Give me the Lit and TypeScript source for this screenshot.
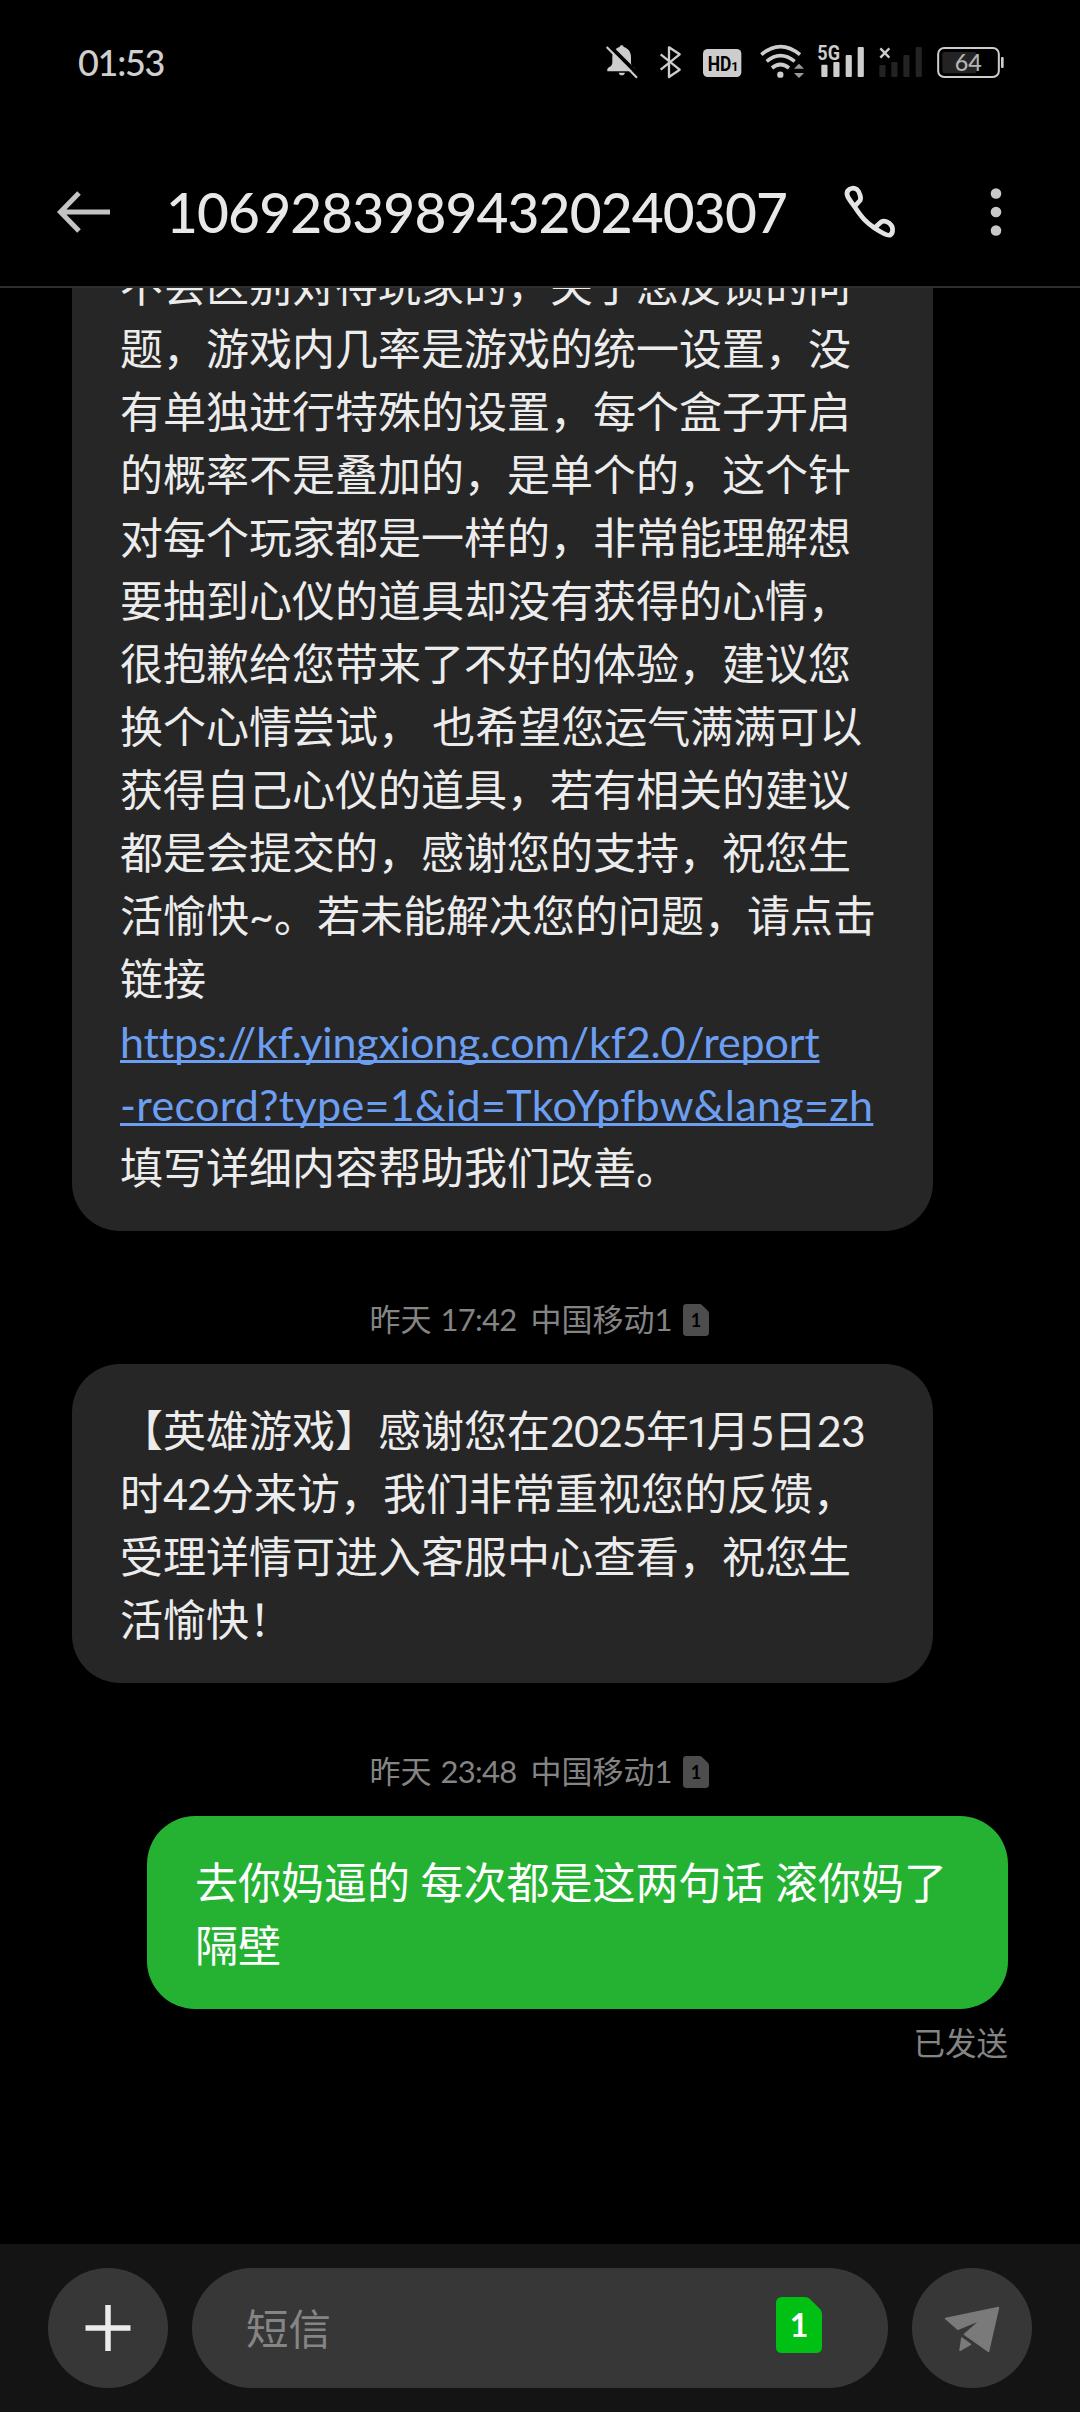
import { LitElement, html, css, svg, nothing } from "lit";
import { customElement, property } from "lit/decorators.js";

type Part = string | { t: string; k: "num" | "one" | "link-a" | "link-b" };
type Line = Part[];

interface Message {
  sent: boolean;
  time: string | null;
  lines: Line[];
}

const MESSAGES: Message[] = [
  {
    sent: false,
    time: null,
    lines: [
      ["不会区别对待玩家的，关于您反馈的问"],
      ["题，游戏内几率是游戏的统一设置，没"],
      ["有单独进行特殊的设置，每个盒子开启"],
      ["的概率不是叠加的，是单个的，这个针"],
      ["对每个玩家都是一样的，非常能理解想"],
      ["要抽到心仪的道具却没有获得的心情，"],
      ["很抱歉给您带来了不好的体验，建议您"],
      ["换个心情尝试， 也希望您运气满满可以"],
      ["获得自己心仪的道具，若有相关的建议"],
      ["都是会提交的，感谢您的支持，祝您生"],
      ["活愉快~。若未能解决您的问题，请点击"],
      ["链接"],
      [{ t: "https://kf.yingxiong.com/kf2.0/report", k: "link-a" }],
      [{ t: "-record?type=1&id=TkoYpfbw&lang=zh", k: "link-b" }],
      ["填写详细内容帮助我们改善。"],
    ],
  },
  {
    sent: false,
    time: "17:42",
    lines: [
      [
        "【英雄游戏】感谢您在",
        { t: "2025", k: "num" },
        "年",
        { t: "1", k: "one" },
        "月",
        { t: "5", k: "num" },
        "日",
        { t: "23", k: "num" },
      ],
      ["时", { t: "42", k: "num" }, "分来访，我们非常重视您的反馈，"],
      ["受理详情可进入客服中心查看，祝您生"],
      ["活愉快！"],
    ],
  },
  {
    sent: true,
    time: "23:48",
    lines: [["去你妈逼的 每次都是这两句话 滚你妈了"], ["隔壁"]],
  },
];

@customElement("status-bar")
class StatusBar extends LitElement {
  static styles = css`
    :host {
      display: flex;
      align-items: flex-start;
      height: 80px;
      padding: 44px 75px 0 78px;
      box-sizing: border-box;
    }
    .time {
      flex: 1;
      font: 500 36px/36px Lato, sans-serif;
      letter-spacing: -1.3px;
      color: #cfcfcf;
    }
    svg {
      display: block;
      height: 36px;
      flex: none;
      fill: #cdcdcd;
    }
    .line {
      fill: none;
      stroke: #cdcdcd;
    }
    .dim {
      fill: #232323;
    }
    .bell { width: 34px; }
    .bt { width: 23px; margin-left: 20px; }
    .hd { width: 40px; margin-left: 20px; }
    .wifi { width: 46px; margin-left: 17px; }
    .cell { width: 48px; margin-left: 12px; }
    .none { width: 45px; margin-left: 13px; }
    .battery { width: 69px; margin-left: 13px; }
    .bold { font-family: Roboto, sans-serif; font-weight: 700; }
    .level { font-family: Lato, sans-serif; font-weight: 500; fill: #b4b4b4; }
  `;

  render() {
    return html`
      <div class="time">01:53</div>
      <svg class="bell" viewBox="75 42 102 108">
        <path d="M125 46c-3 0-6 2-6 5-14 4-22 15-22 30v16c0 8-4 12-10 15-5 3-6 7-5 12h84c1-5 0-9-5-12-6-3-8-7-8-15V81c0-15-8-26-22-30 0-3-3-5-6-5z" />
        <path d="M116 128h19c-1 5-5 8-9.500 8s-8.500-3-9.500-8z" />
        <path d="M85 44L181 140" stroke="#000" stroke-width="12" />
        <path class="line" d="M80 51L171 143" stroke-width="6.500" />
      </svg>
      <svg class="bt" viewBox="237 42 69 108">
        <path class="line" stroke-width="7" stroke-linejoin="round" d="M242 73L299 119L267 141V52L299 73L242 119" />
      </svg>
      <svg class="hd" viewBox="366 42 120 108">
        <rect x="369" y="57" width="115" height="84" rx="14" />
        <text class="bold" x="383" y="123" font-size="62" fill="#000" textLength="71" lengthAdjust="spacingAndGlyphs">HD</text>
        <text class="bold" x="454" y="122" font-size="38" fill="#000">1</text>
      </svg>
      <svg class="wifi" viewBox="537 42 138 108">
        <g class="line" stroke-width="11">
          <path d="M544 74Q601 26 660 74" />
          <path d="M560 94Q601 60 644 94" />
          <path d="M576 114Q601 93 627 114" />
        </g>
        <circle cx="601" cy="134" r="9.500" />
        <path fill="#9a9a9a" d="M657 101l15 15h-30zM657 144l15-15h-30z" />
      </svg>
      <svg class="cell" viewBox="711 42 144 108">
        <text class="bold" x="712" y="90" font-size="60" textLength="68" lengthAdjust="spacingAndGlyphs">5G</text>
        ${[[724, 104], [760, 96], [797, 75], [833, 51]].map(
          ([x, y]) => svg`<rect x=${x} y=${y} width="18.500" height=${141 - y} rx="3" />`,
        )}
      </svg>
      <svg class="none" viewBox="894 42 135 108">
        <path class="line" stroke-width="7" d="M901 55L928 83M928 55L901 83" />
        ${[[898, 105], [934, 96], [970, 75], [1007, 51]].map(
          ([x, y]) => svg`<rect class="dim" x=${x} y=${y} width="18.500" height=${141 - y} rx="3" />`,
        )}
      </svg>
      <svg class="battery" viewBox="1068 42 207 108">
        <rect class="line" x="1074.500" y="54" width="182" height="87" rx="18" stroke-width="6" />
        <rect class="dim" x="1087" y="66" width="103" height="64" rx="7" />
        <rect x="1263" y="81" width="8" height="33" rx="3" />
        <text class="level" x="1124" y="123" font-size="70">64</text>
      </svg>
    `;
  }
}

@customElement("chat-header")
class ChatHeader extends LitElement {
  static styles = css`
    :host {
      display: flex;
      align-items: center;
      height: 208px;
      padding: 58px 66px 0 54px;
      box-sizing: border-box;
      border-bottom: 2px solid #2e2e2e;
    }
    svg {
      display: block;
      flex: none;
    }
    .title {
      flex: 1;
      margin-left: 52px;
      font: 500 55px/60px Lato, sans-serif;
      letter-spacing: -0.85px;
      color: #e8e8e8;
      white-space: nowrap;
    }
    .stroke {
      fill: none;
      stroke: #c4c4c4;
      stroke-width: 5;
    }
    .phone {
      stroke: #e4e4e4;
      stroke-width: 4.800;
      stroke-linejoin: round;
    }
    .more {
      margin-left: 78px;
      fill: #c8c8c8;
    }
  `;

  render() {
    return html`
      <svg width="60" height="60" viewBox="0 0 60 60">
        <path class="stroke" d="M6 30H56M25 11L6.500 30L25 49" />
      </svg>
      <div class="title">10692839894320240307</div>
      <svg width="60" height="60" viewBox="840 182 60 60">
        <path class="stroke phone" d="M854.500 206.500C862 218 866 222 874.500 228C882 233 888 236 890 235C893 233.500 893 229 892 226.500C889 221 883 220 880.500 222.500L874.500 228M854.500 206.500L860 200.500C861.500 198 859.500 191.500 857 189.500C854 187.500 850 188 848 190.500C845 194.500 849 199 854.500 206.500Z" />
      </svg>
      <svg class="more" width="36" height="60" viewBox="978 182 36 60">
        <circle cx="996" cy="193.500" r="5.300" />
        <circle cx="996" cy="212" r="5.300" />
        <circle cx="996" cy="230.500" r="5.300" />
      </svg>
    `;
  }
}

@customElement("sim-chip")
class SimChip extends LitElement {
  static styles = css`
    :host {
      display: block;
      flex: none;
      width: 26px;
      height: 32px;
      white-space: normal;
      --card: #4d4d4d;
      --digit: #000;
    }
    svg {
      display: block;
      width: 100%;
      height: 100%;
    }
    path {
      fill: var(--card);
    }
    text {
      fill: var(--digit);
      font: 700 32px Lato, sans-serif;
      text-anchor: middle;
    }
  `;

  render() {
    return html`
      <svg viewBox="0 0 46 56" preserveAspectRatio="none">
        <path d="M6 0H29Q32 0 34 2L44 12Q46 14 46 17V50Q46 56 40 56H6Q0 56 0 50V6Q0 0 6 0Z" />
        <text x="23" y="40">1</text>
      </svg>
    `;
  }
}

@customElement("chat-message")
class ChatMessage extends LitElement {
  @property({ attribute: false }) message!: Message;

  static styles = css`
    :host {
      display: flex;
      flex-direction: column;
      flex: none;
    }
    .meta {
      display: flex;
      align-items: center;
      justify-content: center;
      height: 40px;
      margin: 69px 0 24px;
      padding-right: 2px;
      font: 400 31px/38px Lato, "Noto Sans CJK SC", sans-serif;
      color: #848484;
      white-space: pre;
    }
    .meta span {
      height: 40px;
    }
    .clock {
      margin: 0 14px 0 9px;
      letter-spacing: -0.7px;
    }
    .meta sim-chip {
      margin-left: 10px;
    }
    .bubble {
      width: 861px;
      margin-left: 72px;
      padding: 35px 48px 32px;
      box-sizing: border-box;
      border-radius: 48px;
      background: #262626;
      color: #ececec;
      font: 400 43px/63px Lato, "Noto Sans CJK SC", sans-serif;
      font-variant-ligatures: none;
    }
    .bubble.sent {
      margin-left: 147px;
      background: #25b233;
      color: #fff;
    }
    .line {
      height: 63px;
      white-space: pre;
      word-spacing: 0.2px;
    }
    .sent .line {
      word-spacing: -0.5px;
    }
    .num {
      letter-spacing: -0.95px;
    }
    .one {
      font-family: Roboto, sans-serif;
      letter-spacing: -4px;
      margin-left: -2.500px;
    }
    .link-a,
    .link-b {
      color: #6c9ff2;
      text-decoration: underline 3px;
      text-underline-offset: 2px;
      text-decoration-skip-ink: none;
      letter-spacing: -0.14px;
    }
    .link-b {
      letter-spacing: 0.33px;
    }
    .state {
      height: 40px;
      margin: 15px 72px 0;
      text-align: right;
      font: 400 31.500px/38px Lato, "Noto Sans CJK SC", sans-serif;
      color: #848484;
    }
  `;

  render() {
    const { sent, time, lines } = this.message;
    return html`
      ${time
        ? html`<div class="meta"><span>昨天</span><span class="clock">${time}</span><span>中国移动1</span><sim-chip></sim-chip></div>`
        : nothing}
      <div class="bubble ${sent ? "sent" : ""}">
        ${lines.map(
          (line) =>
            html`<div class="line">${line.map((p) => (typeof p === "string" ? p : html`<span class=${p.k}>${p.t}</span>`))}</div>`,
        )}
      </div>
      ${sent ? html`<div class="state">已发送</div>` : nothing}
    `;
  }
}

@customElement("chat-composer")
class ChatComposer extends LitElement {
  static styles = css`
    :host {
      display: flex;
      align-items: center;
      gap: 24px;
      height: 168px;
      padding: 0 48px;
      box-sizing: border-box;
      background: #141414;
    }
    .round,
    .field {
      display: flex;
      align-items: center;
      height: 120px;
      border-radius: 60px;
      background: #373737;
    }
    .round {
      width: 120px;
      flex: none;
    }
    .field {
      flex: 1;
      justify-content: space-between;
      padding: 0 66px 0 54px;
      font: 400 42.500px/60px Lato, "Noto Sans CJK SC", sans-serif;
      color: #858585;
    }
    .hint {
      margin-top: 2px;
    }
    sim-chip {
      width: 46px;
      height: 56px;
      margin-top: -6px;
      --card: #00c013;
      --digit: #fff;
    }
    .plus {
      stroke: #ebebeb;
      stroke-width: 5.500;
    }
    .plane {
      fill: #7a7a7a;
      stroke: #7a7a7a;
      stroke-width: 1.500;
      stroke-linejoin: round;
    }
  `;

  render() {
    return html`
      <div class="round">
        <svg width="120" height="120" viewBox="48 2268 120 120">
          <path class="plus" d="M85.500 2328H130.500M108 2305V2351" />
        </svg>
      </div>
      <div class="field"><span class="hint">短信</span><sim-chip></sim-chip></div>
      <div class="round">
        <svg width="120" height="120" viewBox="912 2268 120 120">
          <path class="plane" d="M945.500 2318.500L998.500 2307.500L988.500 2351.500L964.500 2334.300L981 2319.700L957.800 2329.300Z M961.800 2338L970.500 2344.300L960 2350.300Z" />
        </svg>
      </div>
    `;
  }
}

@customElement("app-root")
class AppRoot extends LitElement {
  static styles = css`
    :host {
      display: flex;
      flex-direction: column;
      width: 1080px;
      height: 2412px;
      background: #000;
      overflow: hidden;
    }
    .thread {
      flex: 1;
      min-height: 0;
      display: flex;
      flex-direction: column;
      justify-content: flex-end;
      padding-bottom: 180px;
      overflow: hidden;
    }
  `;

  render() {
    return html`
      <status-bar></status-bar>
      <chat-header></chat-header>
      <main class="thread" lang="zh-CN">
        ${MESSAGES.map((m) => html`<chat-message .message=${m}></chat-message>`)}
      </main>
      <chat-composer></chat-composer>
    `;
  }
}
